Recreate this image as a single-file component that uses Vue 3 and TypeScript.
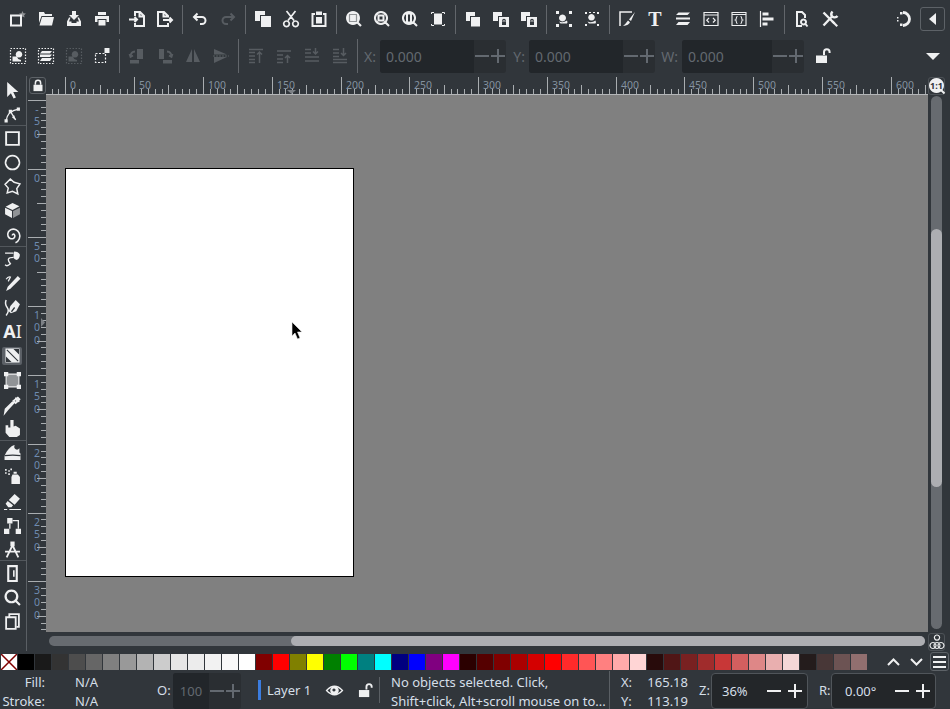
<script setup lang="ts">
import { h } from 'vue'
import type { FunctionalComponent } from 'vue'

interface Spec {
  f?: string
  g?: string
  s?: string
  w?: number
  k?: string
  kf?: string
  d?: string
  t?: string
}

const DARK = '#31363b'

const I: Record<string, Spec> = {
  new: { s: 'M1 4.500h10v10H1z', w: 2, g: 'M12.500 0l1 2.200 2.400.3-1.800 1.700.5 2.400-2.100-1.200-2.100 1.200.5-2.400L9.100 2.500l2.400-.3z' },
  open: { f: 'M1 1h5l1 2h7v2H3.500L1 12zM4 6h12l-2 8.500H1.500z' },
  save: { f: 'M6 0h4v4h3l-5 5-5-5h3zM1 10.500L3 6.500h1.500l-1.500 4h2.500v1.500h5v-1.500H13l-1.500-4H13l2 4V15H1z' },
  print: { f: 'M4 1h8v3H4zM1 5h14v6h-2.500V8h-9v3H1zM4.500 9h7v5.500h-7z' },
  import: { s: 'M6 5V1h5L15 5v10H6V12M10.500 1.500v4H14.500M0 8.500H8M5.500 6l2.500 2.500L5.500 11', w: 2 },
  export: { s: 'M11 6.500V5L7 1H1v14h10V12M6.500 1.500v4H10.500M6 9h9M12.500 6.500L15 9l-2.500 2.500', w: 2 },
  undo: { s: 'M5.500 2.500L2 6l3.500 3.500M2 6h8a3.500 3.500 0 0 1 0 7H8', w: 2 },
  redo: { s: 'M10.500 2.500L14 6l-3.500 3.500M14 6H6a3.500 3.500 0 0 0 0 7h2', w: 2 },
  copy: { f: 'M0 0h10v4H5v6H0zM6 5h10v11H6z' },
  cut: { s: 'M5 9.500L12.500 0M11 9.500L3.500 0M3.500 10a2.800 2.800 0 1 0 .01 0M12.500 10a2.800 2.800 0 1 0 .01 0', w: 1.700 },
  paste: { s: 'M4 3H1.500v12h13V3H12', w: 2, f: 'M5 0.500h6V4H5zM5 6h6v6.500H5z' },
  zsel: { f: 'M7 0a7 7 0 1 1-.01 0z', s: 'M11.500 11.500L15 15', w: 2.200, k: 'M3.500 3.500h7v7h-7z', d: '1 1' },
  zdraw: { s: 'M7 1a6 6 0 1 1-.01 0zM11.500 11.500L15 15M4.500 4.500h5v5h-5z', w: 2 },
  zpage: { s: 'M7 1a6 6 0 1 1-.01 0zM11.500 11.500L15 15M5 2.500h4v9H5z', w: 2 },
  zcenter: { f: 'M4 2.500h8v11H4z', s: 'M1.500 3V1.500H4M12 1.500h2.500V3M1.500 13v1.500H4M12 14.500h2.500V13', w: 1 },
  dup: { f: 'M1 1h9v4H5v5H1zM6 6h9v9.500H6z' },
  clone: { f: 'M0 1h9v4H5v5H0zM6 6h10v10H6z', kf: 'M9 10.500h4V14H9z', k: 'M9.800 10.500V9.500a1.200 1.200 0 0 1 2.400 0v1' },
  group: { f: 'M0 0h3v3H0zM13 0h3v3h-3zM0 13h3v3H0zM13 13h3v3h-3zM6.500 3.500a3.500 3.500 0 1 1-.01 0zM3 10.500q4 2 8-1 1 2 0 3H4.500z' },
  ungroup: { f: 'M1 1h2v2H1zM13 1h2v2h-2zM1 13h2v2H1zM13 13h2v2h-2zM5 1h2v1H5zM9 1h2v1H9zM7.500 3a3.300 3.300 0 1 1-.01 0zM3.500 10.500q4 2 8-1 1 2 0 3H5z' },
  pen: { s: 'M1 15V1h12', w: 1.500, f: 'M16 1L10 8.500l2 1.500zM9 9.500l2 1.800q-1 3-7 3.700 2.500-2 5-5.500z' },
  T: { t: 'T' },
  layers: { f: 'M3.500 1.500h11.500L12.500 4H1zM1 6.500h14L15 8.500H1zM3.500 11h11.500l-2.500 3H1z' },
  xml: { s: 'M1 1.500h14v13H1zM1 4h14M6 7L3.800 9.200 6 11.500M10 7l2.200 2.200-2.200 2.300', w: 1.200 },
  objects: { s: 'M1 1.500h14v13H1zM1 3.500h14M6.500 5.500c-2 0-.5 3-2 3.500 1.500.5 0 3.500 2 3.500M9.500 5.500c2 0 .5 3 2 3.500-1.500.5 0 3.500-2 3.500', w: 1.100 },
  align: { s: 'M1.500 0v16', w: 1.200, f: 'M3.500 1.500h6v3h-6zM3.500 6.500h11v3h-11zM3.500 11.500h5v3h-5z' },
  docprop: { s: 'M11 7V4L8 1H3v14h5M9.500 8.500a2.500 2.500 0 1 0 .01 0M11.500 13l2 2.500', w: 2 },
  prefs: { s: 'M1.500 14.500L10 5.500M10.500 0.500a4 4 0 0 0-.5 5 4 4 0 0 0 5.500-.5M1.500 1.500l11 11', w: 2.400, f: 'M9.500 11L11 9.500l5 5L14.500 16z' },
  snap: { s: 'M8 1.500a6.500 6.500 0 0 1 0 13', w: 2.800, f: 'M5 1h2.500v2.500H5zM5 12.500h2.500V15H5zM2 6h1.500v1.500H2zM2 9h1.500v1.500H2z' },
  selall: { s: 'M0.500 0.500h15v15H.5z', w: 1.200, d: '1.500 1.500', f: 'M9 3a3.300 3.300 0 1 1-.01 0zM2.500 8.500h4.500q.5 3 4 3.500v1.500H2.500z' },
  sellay: { s: 'M0.500 0.500h15v15H.5z', w: 1.200, d: '1.500 1.500', f: 'M4 3h10l-2 2.500H2zM2 6.500h12l-2 2.500H2zM4 10h10l-2 3H2z' },
  rubber: { s: 'M1.500 5.500h10v9h-10z', w: 1.200, d: '2 1.500', f: 'M10.500 0h5v5h-5z' },
  rotl: { f: 'M8 1h6v10H8zM1 12h9v3.500H1z', s: 'M6 3.500a5 5 0 0 0-4.500 4.500M.5 6L1.500 9l2.500-1.500', w: 1.800 },
  rotr: { f: 'M2 1h5v10H2zM6 12h9v3.500H6z', s: 'M10 3.500a5 5 0 0 1 4.500 4.500M15.500 6L14.500 9 12 7.500', w: 1.800 },
  fliph: { f: 'M7 1v13L1 14zM9 1l6 13H9z' },
  flipv: { f: 'M1 1l13 5.500H1zM1 9h13L1 15z', s: 'M0 8h16', w: 1, d: '2 1' },
  top: { s: 'M1 1.500h14M1 4.500h6M1 8h6M1 11.500h6M1 14.500h6M11.500 15V4M9 6.500L11.500 4 14 6.500', w: 1.500 },
  up: { s: 'M1 3h14M1 7h6M1 11h6M1 14.500h6M11.500 15V7.500M9 10l2.500-2.500L14 10', w: 1.500 },
  down: { s: 'M1 1.500h6M1 5h6M1 9h14M1 13h14M11.500 0v6M9 3.500L11.500 6 14 3.500', w: 1.500 },
  bottom: { s: 'M1 1.500h6M1 5h6M1 8.500h6M1 11.500h14M1 14.500h14M11.500 0v7.500M9 5L11.500 7.500 14 5', w: 1.500 },
  lockOpen: { f: 'M1 7.500h11V15H1z', s: 'M9 7V4a2.800 2.800 0 0 1 5.600 0v1', w: 2 },
  lock: { f: 'M2 7h12v8.500H2z', s: 'M4.500 7V4.500a3.500 3.500 0 0 1 7 0V7', w: 2 },
  sel: { f: 'M3 0v14l3.500-3.500 2.500 5 2.200-1-2.500-5H13.500z' },
  node: { s: 'M2 14Q3 5 13.500 3M6 5l5 8', w: 1.200, f: 'M0.500 12.500h3v3h-3zM12 1.500h3v3h-3zM4.500 3.500h3v3h-3zM9.500 8.500L11 13.500 7.500 10.500z' },
  rect: { s: 'M2 2h12v12H2z', w: 1.800 },
  circ: { s: 'M8 1.500a6.500 6.500 0 1 1-.01 0z', w: 1.600 },
  star: { s: 'M6 1L9.500 4 15 5.500 12 10 13 15 8 12.500 3 14 4 9.500 1 6z', w: 1.400 },
  cube: { f: 'M8 1l6.500 3L8 7.500 1.500 4.500zM1 5.500l6.500 3V15L1 11.500z', g: 'M8.500 8.500L15 5.500V11.500L8.500 15z' },
  spiral: { s: 'M8 8a1 1 0 0 1 1.800-.8 2.500 2.500 0 0 1-1 3.600 3.800 3.800 0 0 1-5-2.200 5 5 0 0 1 3-6.300 6.300 6.300 0 0 1 7.500 3.500 6.800 6.800 0 0 1-3.500 9', w: 1.500 },
  bez: { f: 'M9.500 0.500q4 0 5.500 3-.5 4-3 5-2-.5-3-2 0-3 .5-6z', s: 'M1 2h8M9 6Q1 6 6 12q-3 3-5 1', w: 1.300 },
  pencil: { f: 'M13 1l2.500 2.500L6 13l-4 2 1.500-4z', s: 'M2 4q2-3 4-2-1 2-2 4', w: 1.200 },
  calli: { f: 'M11 1l4 4-3.500 6.500-5 2-2-2 1.500-5z', s: 'M2 1q-1.500 4 1 7 2.500 3-1 7.500', w: 1.400, k: 'M7 12L10 8' },
  text: { t: 'AI' },
  grad: { f: 'M0.500 0.500h15v15H.5z', k: 'M2 2L14 14', kf: 'M9 1h6v6zM1 9l6 6H1z' },
  mesh: { g: 'M2 2h12v12H2z', f: 'M0 0h4v4H0zM12 0h4v4h-4zM0 12h4v4H0zM12 12h4v4h-4z', s: 'M3 2h10M3 14h10M2 3v10M14 3v10', w: 1 },
  drop: { s: 'M13 1.500l1.500 1.500-3.500 3.500-2-2zM9.500 6L3 13l-2 2.500 .5-3 7-7', w: 1.700, f: 'M11 1l4 4-2 1-3-3z' },
  bucket: { f: 'M6 0h3v6l2-.5 4 2.500v6l-3 2H5L1.500 12V5h2.500v2H6z' },
  tweak: { f: 'M0.500 15v-4C3 6 6 2 10 1q-1 3 1 4 2 1 3.500-1v4l1 1v6z', k: 'M.5 11q8-1 15 0' },
  spray: { f: 'M8 6h5l2 2.500V15H7V8.500z M9 3.500h3v2H9z M1 1h1.500v1.500H1zM4 2h1.500v1.500H4zM1 4h1.500v1.500H1zM6 .5h1.500V2H6zM4 5h1.500v1.500H4z' },
  eraser: { f: 'M10 1l5 4.500-5 5.500-5.500-4.500zM3.500 7.500l5 4-1.500 2H4L1.500 10zM0 15h3v1H0zM5 15h11v1H5z' },
  connector: { f: 'M3 1h5v5H3zM0 11h5v5H0zM11 11h5v5h-5z', s: 'M8 3.500h5.500v7.500M5.500 6v5', w: 1.200 },
  lpe: { s: 'M8 4L2.500 15.500M8 4l5.500 11.500M1 10h14', w: 1.700, f: 'M6 0.500h4v4.500H6z' },
  measure: { s: 'M4 1h8v14H4z', w: 2, f: 'M8.500 5h1.500v6H8.500z' },
  zoom: { s: 'M7 1.500a5.500 5.500 0 1 1-.01 0zM11 11l4 4', w: 2 },
  pages: { s: 'M5 3V1h9v12h-2M2 4h9v11H2z', w: 1.700 },
  eye: { s: 'M0.500 8Q8 0 15.500 8 8 16 .5 8z', w: 1.200, f: 'M8 4a4 4 0 1 1-.01 0z', kf: 'M7.500 6a1.500 1.500 0 1 1-.01 0z' },
  one: { f: 'M7.500 0a7.500 7.500 0 1 1-.01 0z', s: 'M12 12l3.500 3.500', w: 2 },
  cms: { s: 'M8 1a2.600 2.600 0 1 1-.01 0zM4 8.500a3 3 0 1 1-.01 0zM12 8.500a3 3 0 1 1-.01 0zM8 8.500a3 3 0 1 1-.01 0z', w: 1.200 },
}

const Ico: FunctionalComponent<{ n: string; size?: number }> = (p) => {
  const c = I[p.n]
  const size = p.size ?? 16
  const kids = []
  if (c.g) kids.push(h('path', { d: c.g, fill: 'currentColor', 'fill-opacity': 0.5 }))
  if (c.f) kids.push(h('path', { d: c.f, fill: 'currentColor' }))
  if (c.s)
    kids.push(
      h('path', {
        d: c.s,
        fill: 'none',
        stroke: 'currentColor',
        'stroke-width': c.w ?? 1.500,
        'stroke-dasharray': c.d && !c.k ? c.d : undefined,
      }),
    )
  if (c.kf) kids.push(h('path', { d: c.kf, fill: DARK }))
  if (c.k)
    kids.push(
      h('path', {
        d: c.k,
        fill: 'none',
        stroke: DARK,
        'stroke-width': 1.200,
        'stroke-dasharray': c.d,
      }),
    )
  if (c.t === 'T')
    kids.push(h('text', { x: 8, y: 15, 'text-anchor': 'middle', 'font-size': 20, 'font-weight': 700, 'font-family': 'Liberation Serif, serif', fill: 'currentColor' }, 'T'))
  if (c.t === 'AI')
    kids.push(
      h('text', { x: 8, y: 14.500, 'text-anchor': 'middle', 'font-size': 17, 'font-family': 'Noto Sans, sans-serif', fill: 'currentColor' }, [
        h('tspan', { 'font-weight': 700 }, 'A'),
        h('tspan', { 'font-weight': 400 }, 'I'),
      ]),
    )
  if (p.n === 'one')
    kids.push(h('text', { x: 7.500, y: 10.500, 'text-anchor': 'middle', 'font-size': 9, 'font-weight': 700, 'font-family': 'Noto Sans, sans-serif', fill: DARK }, '1:1'))
  return h('svg', { width: size, height: size, viewBox: '0 0 16 16', class: 'ico' }, kids)
}
Ico.props = ['n', 'size']

type Group = { n: string; dim?: boolean }[]

const row1: Group[] = [
  [{ n: 'new' }, { n: 'open' }, { n: 'save' }, { n: 'print' }],
  [{ n: 'import' }, { n: 'export' }],
  [{ n: 'undo' }, { n: 'redo', dim: true }],
  [{ n: 'copy' }, { n: 'cut' }, { n: 'paste' }],
  [{ n: 'zsel' }, { n: 'zdraw' }, { n: 'zpage' }, { n: 'zcenter' }],
  [{ n: 'dup' }, { n: 'clone' }, { n: 'clone' }],
  [{ n: 'group' }, { n: 'ungroup' }],
  [{ n: 'pen' }, { n: 'T' }, { n: 'layers' }, { n: 'xml' }, { n: 'objects' }, { n: 'align' }],
  [{ n: 'docprop' }, { n: 'prefs' }],
]

const row2: Group[] = [
  [{ n: 'selall' }, { n: 'sellay' }, { n: 'selall', dim: true }, { n: 'rubber' }],
  [{ n: 'rotl', dim: true }, { n: 'rotr', dim: true }, { n: 'fliph', dim: true }, { n: 'flipv', dim: true }],
  [{ n: 'top', dim: true }, { n: 'up', dim: true }, { n: 'down', dim: true }, { n: 'bottom', dim: true }],
]

const fields = [
  { label: 'X:', cls: 'lx', w: 'fx' },
  { label: 'Y:', cls: 'ly', w: 'fx' },
  { label: 'W:', cls: 'lw', w: 'fw' },
]

const tools: string[][] = [
  ['sel', 'node'],
  ['rect', 'circ', 'star', 'cube', 'spiral'],
  ['bez', 'pencil', 'calli', 'text', 'grad', 'mesh', 'drop', 'bucket'],
  ['tweak', 'spray', 'eraser', 'connector', 'lpe'],
  ['measure', 'zoom', 'pages'],
]

const SCALE = 1.376
const hTicks: { x: number; h: number; label?: string }[] = []
for (let v = -10; 19.300 + v * SCALE < 882; v += 5) {
  const major = v % 50 === 0
  const mid = !major && v % 25 === 0
  hTicks.push({
    x: Math.round(19.300 + v * SCALE) + 0.500,
    h: major ? 17 : mid ? 9 : 5,
    label: major && v >= 0 ? String(v) : undefined,
  })
}

const vTicks: { y: number; w: number; chars: { c: string; y: number }[] }[] = []
for (let v = -50; v <= 340; v += 5) {
  const y = Math.round(73.500 + v * SCALE) + 0.500
  const major = v % 50 === 0
  const mid = !major && v % 25 === 0
  const chars = major ? String(v).split('').map((c, i) => ({ c, y: y + 12 + 12.500 * i })) : []
  vTicks.push({ y, w: major ? 18 : mid ? 9 : 5, chars })
}

const palette = [
  '#000000', '#1a1a1a', '#333333', '#4d4d4d', '#666666', '#808080', '#999999', '#b3b3b3', '#cccccc',
  '#e6e6e6', '#ececec', '#f2f2f2', '#f9f9f9', '#ffffff', '#800000', '#ff0000', '#808000', '#ffff00',
  '#008000', '#00ff00', '#008080', '#00ffff', '#000080', '#0000ff', '#800080', '#ff00ff', '#2b0000',
  '#550000', '#800000', '#aa0000', '#d40000', '#ff0000', '#ff2a2a', '#ff5555', '#ff8080', '#ffaaaa',
  '#ffd5d5', '#280b0b', '#501616', '#782121', '#a02c2c', '#c83737', '#d35f5f', '#de8787', '#e9afaf',
  '#f4d7d7', '#241c1c', '#483737', '#6c5353', '#916f6f',
]
</script>

<template>
  <div class="app">
    <div class="bar bar1">
      <template v-for="(g, i) in row1" :key="i">
        <i v-if="i" class="sep"></i>
        <span v-for="(b, j) in g" :key="j" class="btn" :class="{ dim: b.dim }"><Ico :n="b.n" /></span>
      </template>
      <span class="grow"></span>
      <span class="btn snap"><Ico n="snap" /></span>
      <span class="collapse"><svg width="8" height="12" viewBox="0 0 8 12"><path d="M7 0v12L0 6z" fill="currentColor" /></svg></span>
    </div>

    <div class="bar bar2">
      <template v-for="(g, i) in row2" :key="i">
        <i v-if="i" class="sep"></i>
        <span v-for="(b, j) in g" :key="j" class="btn" :class="{ dim: b.dim }"><Ico :n="b.n" /></span>
      </template>
      <i class="sep"></i>
      <template v-for="f in fields" :key="f.label">
        <label class="flabel" :class="f.cls">{{ f.label }}</label>
        <div class="spin" :class="f.w">
          <span class="val">0.000</span>
          <span class="sb minus"><i></i></span>
          <span class="sb plus"><i></i></span>
        </div>
      </template>
      <span class="lockbtn"><Ico n="lockOpen" /></span>
      <span class="grow"></span>
      <svg class="more" width="14" height="7" viewBox="0 0 14 7"><path d="M0 0h14L7 7z" fill="#eff0f1" /></svg>
    </div>

    <div class="mid">
      <aside class="tools">
        <div v-for="(g, i) in tools" :key="i" class="tgroup" :class="{ first: i === 0 }">
          <span v-for="t in g" :key="t" class="tool" :class="{ active: t === 'grad' }"><Ico :n="t" :size="t === 'grad' ? 15 : 17" /></span>
        </div>
      </aside>

      <div class="work">
        <div class="corner"><span class="rlock"><Ico n="lock" :size="15" /></span></div>
        <svg class="hruler" width="882" height="19" viewBox="0 0 882 19">
          <g v-for="t in hTicks" :key="t.x">
            <path :d="`M${t.x} ${18 - t.h}V18`" stroke="#a9adb0" stroke-width="1" />
            <text v-if="t.label" :x="t.x + 4.500" y="13" class="rt">{{ t.label }}</text>
          </g>
          <path d="M241 14h9l-4.500 4z" fill="#7d8186" />
          <path d="M0 18.500H882" stroke="#b4b6b8" stroke-width="1" />
        </svg>
        <div class="zoom1"><Ico n="one" :size="16" /></div>

        <svg class="vruler" width="19" height="537" viewBox="0 0 19 537">
          <g v-for="t in vTicks" :key="t.y">
            <path :d="`M${19 - t.w} ${t.y}H19`" stroke="#a9adb0" stroke-width="1" />
            <text v-for="(c, i) in t.chars" :key="i" x="10" :y="c.y" text-anchor="middle" class="rv">{{ c.c }}</text>
          </g>
          <path d="M14 223v9l4-4.500z" fill="#7d8186" />
        </svg>

        <div class="canvas">
          <div class="page"></div>
          <svg class="cursor" width="13" height="20" viewBox="0 0 13 20">
            <path d="M1 0v14l3-3 2.500 6 2.500-1-2.500-6H11z" fill="#000" stroke="#eee" stroke-width=".6" />
          </svg>
        </div>

        <div class="vscroll"><div class="vthumb"></div></div>

        <div></div>
        <div class="hscroll"><div class="hthumb"></div></div>
        <div class="cms"><Ico n="cms" :size="16" /></div>
      </div>
    </div>

    <div class="palette">
      <span class="sw none"><svg width="16" height="16" viewBox="0 0 16 16"><path d="M0 0l16 16M16 0L0 16" stroke="#800000" stroke-width="1.500" /></svg></span>
      <span v-for="(c, i) in palette" :key="i" class="sw" :style="{ background: c }"></span>
      <span class="grow"></span>
      <svg class="chev" width="13" height="8" viewBox="0 0 13 8"><path d="M1 7l5.500-5.500L12 7" fill="none" stroke="#eff0f1" stroke-width="2" /></svg>
      <svg class="chev c2" width="13" height="8" viewBox="0 0 13 8"><path d="M1 1l5.500 5.500L12 1" fill="none" stroke="#eff0f1" stroke-width="2" /></svg>
      <span class="burger"><i></i><i></i><i></i></span>
    </div>

    <div class="status">
      <div class="fs">
        <span class="l">Fill:</span><span class="v">N/A</span>
        <span class="l">Stroke:</span><span class="v">N/A</span>
      </div>
      <span class="olabel">O:</span>
      <div class="ospin">
        <span class="oval">100</span>
        <span class="sb minus"><i></i></span>
        <span class="sb plus"><i></i></span>
      </div>
      <i class="layerbar"></i>
      <span class="layer">Layer 1</span>
      <span class="eye"><Ico n="eye" :size="17" /></span>
      <span class="slock"><Ico n="lockOpen" :size="15" /></span>
      <i class="vsep"></i>
      <div class="msg">No objects selected. Click,<br />Shift+click, Alt+scroll mouse on to...</div>
      <i class="vsep tall"></i>
      <div class="coords">
        <span>X:</span><span class="cv">165.18</span>
        <span>Y:</span><span class="cv">113.19</span>
      </div>
      <span class="zl">Z:</span>
      <div class="box zbox">
        <span class="bv">36%</span>
        <span class="grow"></span>
        <span class="pm minus"><i></i></span><span class="pm plus"><i></i></span>
      </div>
      <span class="rl">R:</span>
      <div class="box rbox">
        <span class="bv">0.00°</span>
        <span class="grow"></span>
        <span class="pm minus"><i></i></span><span class="pm plus"><i></i></span>
      </div>
    </div>
  </div>
</template>

<style>
html, body { margin: 0; padding: 0; background: #31363b; overflow: hidden; }
</style>

<style scoped>
.app {
  width: 950px;
  height: 709px;
  display: flex;
  flex-direction: column;
  background: #31363b;
  color: #eff0f1;
  font-family: "Noto Sans", sans-serif;
  font-size: 13px;
  overflow: hidden;
}
.bar { display: flex; align-items: center; height: 38px; padding-left: 4px; flex: none; box-sizing: border-box; }
.bar2 { padding-bottom: 2px; }
.btn { width: 28px; height: 32px; display: flex; align-items: center; justify-content: center; flex: none; }
.btn.dim { color: #575c61; }
.sep { width: 1px; height: 29px; background: #62666b; margin: 0 3px; flex: none; }
.bar2 .sep { height: 34px; }
.grow { flex: 1; }
.ico { display: block; overflow: visible; }
.snap { margin-right: 1px; }
.collapse {
  width: 23px;
  height: 22px;
  border: 1px solid #5d6267;
  border-radius: 3px;
  display: flex;
  align-items: center;
  justify-content: center;
  margin-right: 5px;
  margin-left: 2px;
}
.flabel { color: #636970; font-size: 14px; text-align: right; padding-right: 4px; box-sizing: border-box; flex: none; }
.lx { width: 19px; }
.ly { width: 23px; }
.lw { width: 27px; }
.spin {
  height: 33px;
  display: flex;
  align-items: center;
  background: #2a2e32;
  border-radius: 3px;
  color: #636970;
  flex: none;
}
.fx { width: 126px; }
.fw { width: 122px; }
.val {
  flex: 1;
  align-self: stretch;
  display: flex;
  align-items: center;
  padding-left: 6px;
  background: #22262a;
  border-radius: 3px 0 0 3px;
  font-size: 14px;
}
.sb { width: 16px; color: #636970; flex: none; display: flex; justify-content: center; align-items: center; }
.minus i { display: block; width: 14px; height: 2px; background: currentColor; }
.plus i { display: block; width: 14px; height: 14px; position: relative; }
.plus i::before, .plus i::after { content: ""; position: absolute; background: currentColor; }
.plus i::before { left: 0; right: 0; top: 6px; height: 2px; }
.plus i::after { top: 0; bottom: 0; left: 6px; width: 2px; }
.lockbtn { margin-left: 11px; }
.more { margin-right: 10px; }
.mid { flex: 1; display: flex; min-height: 0; }
.tools { width: 26px; border-right: 1px solid #5a5f64; flex: none; display: flex; flex-direction: column; padding-top: 2px; height: 573px; }
.tgroup { display: flex; flex-direction: column; box-shadow: 0 -1px 0 #52575c; }
.tgroup.first { box-shadow: none; }
.tool { width: 24px; height: 24.180px; display: flex; align-items: center; justify-content: center; flex: none; }
.tool.active { position: relative; }
.tool.active::before { content: ""; position: absolute; inset: 3px 2px; background: #5b6066; border-radius: 2px; }
.tool.active .ico { position: relative; }
.work {
  flex: 1;
  display: grid;
  grid-template-columns: 19px 882px 22px;
  grid-template-rows: 19px 537px 19px;
}
.corner { display: flex; align-items: center; justify-content: center; }
.rlock {
  width: 17px;
  height: 17px;
  border: 1px solid #5d6267;
  border-radius: 3px;
  box-sizing: border-box;
  display: flex;
  align-items: center;
  justify-content: center;
  margin-left: 2px;
}
.rlock .ico { width: 12px; height: 13px; }
.hruler, .vruler { display: block; }
.rt { font-size: 10.500px; fill: #83919f; font-family: "Noto Sans", sans-serif; }
.rv { font-size: 10.500px; fill: #6f8cb0; font-family: "Noto Sans", sans-serif; }
.zoom1 { display: flex; align-items: center; justify-content: center; width: 17px; height: 18px; border: 1px solid #4d5257; border-radius: 3px; box-sizing: border-box; margin-top: 1px; }
.canvas { background: #808080; position: relative; overflow: hidden; }
.page {
  position: absolute;
  left: 19px;
  top: 73px;
  width: 287px;
  height: 407px;
  background: #fff;
  border: 1px solid #000;
}
.cursor { position: absolute; left: 244.500px; top: 226.500px; }
.vscroll { position: relative; padding: 1px 0 3px 3px; display: flex; box-sizing: border-box; }
.vscroll::before {
  content: "";
  width: 11px;
  background: #676b70;
  border-radius: 6px;
  display: block;
}
.vthumb {
  position: absolute;
  left: 3px;
  top: 134px;
  width: 11px;
  height: 258px;
  background: #adaeb2;
  border-radius: 6px;
}
.hscroll { position: relative; display: flex; padding: 4px 3px 5px 3px; box-sizing: border-box; justify-content: flex-end; }
.hscroll::before {
  content: "";
  position: absolute;
  left: 3px;
  right: 3px;
  top: 4px;
  height: 10px;
  background: #676b70;
  border-radius: 5px;
}
.hthumb { position: relative; width: 634px; height: 10px; background: #adaeb2; border-radius: 5px; }
.cms { display: flex; align-items: center; justify-content: center; width: 17px; height: 18px; border: 1px solid #4d5257; border-radius: 3px; box-sizing: border-box; color: #eff0f1; margin-top: 1px; }
.palette { height: 20px; display: flex; align-items: flex-start; padding-left: 1px; flex: none; gap: 1px; padding-top: 2.500px; box-sizing: border-box; }
.sw { width: 16px; height: 16.500px; flex: none; display: block; }
.none { background: #fff; overflow: hidden; }
.none svg { display: block; }
.chev { align-self: center; margin-right: 9px; }
.c2 { margin-right: 6px; }
.burger {
  width: 19px;
  height: 19px;
  border: 1px solid #5d6267;
  border-radius: 3px;
  box-sizing: border-box;
  display: flex;
  flex-direction: column;
  justify-content: center;
  gap: 3px;
  padding: 0 2px;
  margin-right: 1px;
  margin-top: -1.500px;
}
.burger i { height: 2px; background: #eff0f1; display: block; }
.status { height: 38px; display: flex; align-items: center; flex: none; color: #d5dfe8; }
.fs { display: grid; grid-template-columns: 45px 30px; grid-auto-rows: 19px; width: 153px; line-height: 19px; flex: none; padding-top: 4px; }
.fs .l { grid-column: 1; text-align: right; }
.fs .v { grid-column: 2; padding-left: 30px; }
.olabel { width: 20px; flex: none; padding-left: 4px; box-sizing: border-box; }
.ospin { width: 68px; height: 36px; margin-top: 2px; display: flex; align-items: center; background: #2a2e32; border-radius: 3px; color: #636970; flex: none; }
.oval { width: 36px; flex: none; align-self: stretch; display: flex; align-items: center; justify-content: center; background: #22262a; border-radius: 3px 0 0 3px; }
.layerbar { width: 3px; height: 20px; background: #3b7de0; margin-left: 17px; flex: none; }
.layer { margin-left: 6px; width: 45px; flex: none; white-space: nowrap; }
.eye { margin-left: 14px; color: #eff0f1; flex: none; }
.slock { margin-left: 15px; color: #eff0f1; flex: none; }
.vsep { width: 1px; height: 26px; background: #5a5f64; margin-left: 6px; flex: none; }
.vsep.tall { height: 38px; margin-left: 0; }
.msg { margin-left: 11px; width: 218px; flex: none; line-height: 19px; white-space: nowrap; padding-top: 3px; }
.coords { margin-left: 11px; width: 67px; display: grid; grid-template-columns: 25px 42px; grid-auto-rows: 19px; line-height: 19px; flex: none; padding-top: 3px; }
.cv { text-align: right; }
.zl { margin-left: 11px; width: 12px; flex: none; }
.box {
  height: 36px;
  margin-top: 2px;
  background: #232629;
  border: 1px solid #50555a;
  border-radius: 4px;
  box-sizing: border-box;
  display: flex;
  align-items: center;
  flex: none;
  padding-left: 10px;
  padding-right: 2px;
}
.zbox { width: 97px; }
.rbox { width: 105px; }
.rbox .bv { padding-left: 3px; }
.rl { margin-left: 11px; width: 12px; flex: none; }
.pm { width: 21px; display: flex; justify-content: center; align-items: center; color: #eff0f1; flex: none; }
</style>
